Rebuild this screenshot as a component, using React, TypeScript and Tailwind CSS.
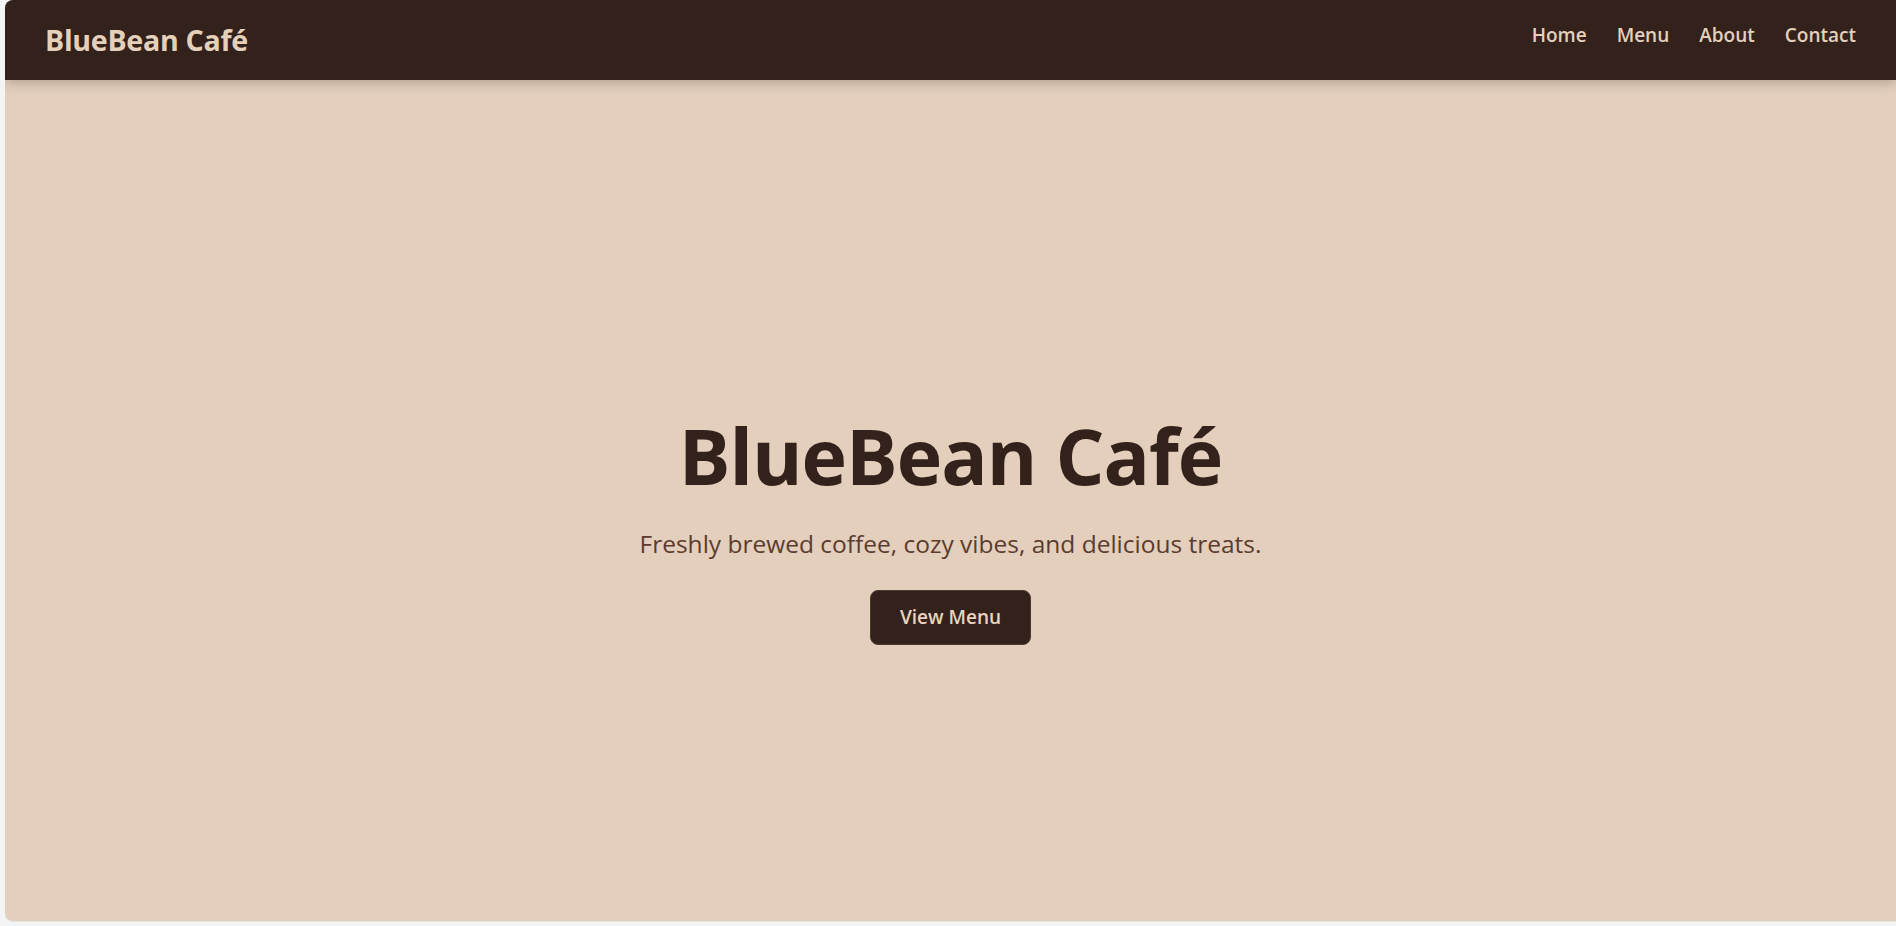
import * as React from 'react';

const links = ['Home', 'Menu', 'About', 'Contact'];

export default function App() {
    return (
        <div className="w-full h-[926px] bg-[#f4f4f4] pl-[5px] overflow-hidden" style={{ fontFamily: '"Open Sans", "Noto Sans", sans-serif' }}>
            <div className="flex flex-col h-[922px] bg-[#e3cfbc] rounded-l-lg overflow-hidden border-b border-[#e6e6e6]">
                <nav className="flex items-start justify-between h-[80px] px-10 pt-5 bg-[#33221b] shadow-[0_4px_10px_rgba(0,0,0,0.18)] relative z-10 shrink-0">
                    <div className="text-[28.6px] leading-[40px] font-bold text-[#e5d0bc] tracking-[-0.3px]">BlueBean Café</div>
                    <ul className="flex gap-[30px] m-0 p-0 list-none pt-[2px]">
                        {links.map((l) => (
                            <li key={l}>
                                <a href="#" className="text-[19px] leading-[27px] font-semibold text-[#e5d0bc] no-underline">
                                    {l}
                                </a>
                            </li>
                        ))}
                    </ul>
                </nav>
                <section className="flex-1 flex flex-col items-center justify-center text-center pt-[53px]">
                    <h1 className="m-0 text-[77px] leading-[92px] font-bold text-[#33211b] tracking-[-1px]">BlueBean Café</h1>
                    <p className="mt-[26px] mb-0 text-[24.5px] leading-[32px] text-[#5b3c2e]">
                        Freshly brewed coffee, cozy vibes, and delicious treats.
                    </p>
                    <button className="mt-[30px] h-[55px] px-[29px] rounded-lg bg-[#33221b] border border-[#4a3a32] text-[19px] font-semibold text-[#e8d4c0]">
                        View Menu
                    </button>
                </section>
            </div>
        </div>
    );
}
